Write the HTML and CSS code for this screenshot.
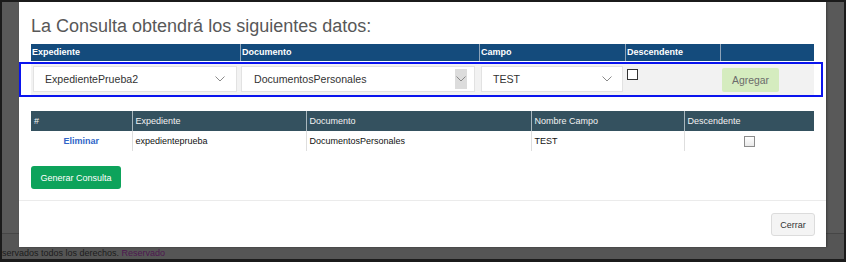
FILE: index.html
```html
<!DOCTYPE html>
<html lang="es">
<head>
  <meta charset="UTF-8">
  <title>Consulta</title>
  <link rel="stylesheet" href="styles.css">
</head>
<body>

  <div class="screen">

    <!-- MODAL -->
    <div class="modal">
      <div class="modal-body">
        <h4 class="modal-title">La Consulta obtendrá los siguientes datos:</h4>

        <div class="cols head">
          <div>Expediente</div>
          <div>Documento</div>
          <div>Campo</div>
          <div>Descendente</div>
          <div></div>
        </div>

        <div class="highlight">
          <div class="cols fields">
            <div class="cell">
              <div class="select sel-exp">
                <span>ExpedientePrueba2</span>
                <svg class="chev" width="10" height="6" viewBox="0 0 10 6"><path d="M0.5 0.5 L5 5 L9.5 0.5" fill="none" stroke="#8a8a8a" stroke-width="1"/></svg>
              </div>
            </div>
            <div class="cell">
              <div class="select sel-doc">
                <span>DocumentosPersonales</span>
                <span class="arrow-box">
                  <svg width="10" height="6" viewBox="0 0 10 6"><path d="M0.5 0.5 L5 5 L9.5 0.5" fill="none" stroke="#8a8a8a" stroke-width="1"/></svg>
                </span>
              </div>
            </div>
            <div class="cell">
              <div class="select sel-campo">
                <span>TEST</span>
                <svg class="chev" width="10" height="6" viewBox="0 0 10 6"><path d="M0.5 0.5 L5 5 L9.5 0.5" fill="none" stroke="#8a8a8a" stroke-width="1"/></svg>
              </div>
            </div>
            <div class="cell">
              <span class="check"></span>
            </div>
            <div class="cell">
              <button class="btn-add">Agregar</button>
            </div>
          </div>
        </div>

        <table class="results">
          <thead>
            <tr>
              <th class="c1">#</th>
              <th class="c2">Expediente</th>
              <th class="c3">Documento</th>
              <th class="c4">Nombre Campo</th>
              <th class="c5">Descendente</th>
            </tr>
          </thead>
          <tbody>
            <tr>
              <td class="center"><a href="#" class="link">Eliminar</a></td>
              <td>expedienteprueba</td>
              <td>DocumentosPersonales</td>
              <td>TEST</td>
              <td class="center"><span class="check light"></span></td>
            </tr>
          </tbody>
        </table>

        <button class="btn-generate">Generar Consulta</button>
      </div>

      <div class="modal-footer">
        <button class="btn-close">Cerrar</button>
      </div>
    </div>

    <!-- PAGE FOOTER (behind overlay) -->
    <div class="page-footer">servados todos los derechos. <span class="owner">Reservado</span></div>
  </div>

</body>
</html>
```

FILE: styles.css
```css
body {
  margin: 0;
  font-family: 'Liberation Sans', Arial, sans-serif;
  background: #1b1b1b;
}

.screen {
  width: 846px;
  height: 262px;
  box-sizing: border-box;
  border: 2px solid #1b1b1b;
  border-bottom-width: 3px;
  overflow: hidden;
  background: linear-gradient(#595959 0, #595959 231px, #464646 231px, #464646 232px, #555 232px);
}

.modal {
  margin-left: 17px;
  width: 807px;
  height: 245px;
  background: #fff;
  box-shadow: 1px 0 2px rgba(0, 0, 0, 0.35);
}

.modal-body {
  box-sizing: border-box;
  padding: 14px 12px 0;
  height: 198px;
}

.modal-title {
  margin: 0 0 7px;
  height: 21px;
  font-size: 18px;
  line-height: 21px;
  font-weight: normal;
  color: #585858;
}

.cols {
  display: grid;
  grid-template-columns: 209px 239px 146px 95px 94px;
}

.head {
  height: 17px;
  background: #144b7c;
}

.head div {
  color: #fff;
  font-size: 9px;
  font-weight: bold;
  line-height: 17px;
  padding-left: 1px;
  border-left: 1px solid #8ea3b8;
}

.head div:first-child {
  border-left: none;
}

.highlight {
  margin: 1px -9px 0 -12px;
  border: 2px solid #0a14ee;
  padding: 0 7px 0 10px;
  height: 31px;
}

.fields {
  height: 31px;
  background: #f2f2f2;
}

.fields .cell {
  padding-top: 2px;
}

.select {
  box-sizing: border-box;
  height: 26px;
  background: #fff;
  border: 1px solid #e2e2e2;
  display: flex;
  align-items: center;
  justify-content: space-between;
  font-size: 10.6px;
  color: #333;
}

.sel-exp {
  margin-left: 2px;
  width: 204px;
  padding: 0 11px 0 11px;
}

.sel-doc {
  margin-left: 1px;
  width: 234px;
  padding: 0 7px 0 12px;
}

.sel-campo {
  margin-left: 2px;
  width: 142px;
  padding: 0 10px 0 11px;
}

.arrow-box {
  width: 12px;
  height: 20px;
  background: #dcdcdc;
  display: flex;
  align-items: center;
  justify-content: center;
}

.check {
  display: inline-block;
  box-sizing: border-box;
  width: 11px;
  height: 11px;
  border: 1px solid #333;
  background: #fff;
}

.fields .check {
  margin: 1px 0 0 2px;
}

.check.light {
  border-color: #8c8c8c;
  background: linear-gradient(#fff, #e9e9e9);
}

.btn-add {
  margin: 2px 0 0 2px;
  width: 57px;
  height: 24px;
  border: none;
  border-radius: 2px;
  background: #d5ecbf;
  color: #6b6b6b;
  font-family: inherit;
  font-size: 10.4px;
  padding: 0;
}

.results {
  margin-top: 14px;
  width: 783px;
  border-collapse: collapse;
  font-size: 9px;
  table-layout: fixed;
}

.results th {
  box-sizing: border-box;
  height: 20px;
  padding: 0 0 0 3px;
  background: #34515f;
  color: #f2f2f2;
  font-weight: normal;
  text-align: left;
  border-left: 1px solid #a9b7be;
}

.results th:first-child,
.results td:first-child {
  border-left: none;
}

.results .c1 { width: 101px; }
.results .c2 { width: 174px; }
.results .c3 { width: 225px; }
.results .c4 { width: 153px; }
.results .c5 { width: 130px; }

.results td {
  height: 20px;
  padding: 0 0 0 3px;
  color: #111;
  border-left: 1px solid #dedede;
}

.results td.center {
  text-align: center;
  padding: 0;
}

.results td .check {
  vertical-align: middle;
}

.link {
  color: #2f64c8;
  font-weight: bold;
  text-decoration: none;
}

.btn-generate {
  display: block;
  margin-top: 15px;
  width: 90px;
  height: 23px;
  border: none;
  border-radius: 3px;
  background: #0da35b;
  color: #fff;
  font-family: inherit;
  font-size: 9px;
  white-space: nowrap;
  padding: 0;
}

.modal-footer {
  border-top: 1px solid #ebebeb;
  height: 46px;
  display: flex;
  justify-content: flex-end;
  align-items: flex-start;
  padding-right: 11px;
}

.btn-close {
  margin-top: 12px;
  width: 44px;
  height: 23px;
  border: 1px solid #dcdcdc;
  border-radius: 3px;
  background: #f4f4f4;
  color: #333;
  font-family: inherit;
  font-size: 9px;
  padding: 0;
}

.page-footer {
  height: 12px;
  line-height: 12px;
  font-size: 9px;
  color: #1c1c1c;
  white-space: nowrap;
}

.owner {
  color: #4e1750;
}
```
